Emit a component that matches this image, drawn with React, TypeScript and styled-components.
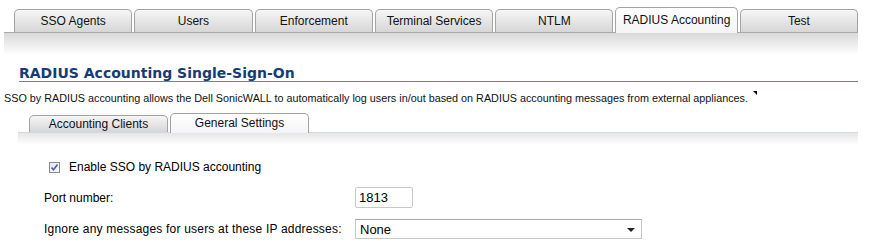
import React from 'react';
import styled, { createGlobalStyle } from 'styled-components';

const GlobalStyle = createGlobalStyle`
  body {
    margin:0;
    background:#fff;
    font-family:"Liberation Sans", Arial, sans-serif;
    color:#000;
  }
`

const Page = styled.div`
  width:870px;
  height:247px;
  overflow:hidden;
  padding-top:7px;
  box-sizing:border-box;
`

const TabBar = styled.div<{ $left: number; $width: number; $pad: number; $line: string }>`
  display:flex;
  align-items:flex-end;
  gap:2px;
  margin-left:${({ $left }) => $left}px;
  width:${({ $width }) => $width}px;
  padding-left:${({ $pad }) => $pad}px;
  box-sizing:border-box;
  border-bottom:1px solid ${({ $line }) => $line};
`

const Tab = styled.div<{ $active?: boolean; $w: number; $h: number }>`
  width:${({ $w }) => $w}px;
  height:${({ $h, $active }) => ($active ? $h + 3 : $h)}px;
  box-sizing:border-box;
  border:1px solid #a3a3a3;
  border-bottom:none;
  border-radius:5px 5px 0 0;
  background:${({ $active }) =>
    $active ? 'linear-gradient(#ffffff, #f4f4f6)' : 'linear-gradient(#f6f6f6, #d6d6d6)'};
  display:flex;
  align-items:center;
  justify-content:center;
  font-size:12px;
  color:#111;
  margin-bottom:${({ $active }) => ($active ? '-1px' : '0')};
  padding-bottom:${({ $active }) => ($active ? '1px' : '0')};
`

const Fade = styled.div<{ $left: number; $width: number; $h: number; $from: string }>`
  margin-left:${({ $left }) => $left}px;
  width:${({ $width }) => $width}px;
  height:${({ $h }) => $h}px;
  background:linear-gradient(${({ $from }) => $from}, #ffffff);
`

const Title = styled.h2`
  margin:11px 0 0 19px;
  width:839px;
  font-family:"DejaVu Sans", Verdana, sans-serif;
  font-size:14px;
  font-weight:bold;
  color:#173b76;
  line-height:15px;
  border-bottom:1px solid #5a8aa8;
`

const Desc = styled.p`
  margin:10px 0 0 4px;
  font-size:10.8px;
  line-height:13px;
  color:#111;
  display:flex;
  align-items:flex-start;
  gap:5px;
`

const Mark = styled.span`
  display:inline-block;
  width:0;
  height:0;
  border-top:4px solid #000;
  border-left:4px solid transparent;
  margin-top:-1px;
`

const SubTabs = styled.div`
  margin-top:8px;
`

const Form = styled.div`
  padding:15px 0 0 44px;
  display:flex;
  flex-direction:column;
  font-size:12px;
`

const CheckRow = styled.label`
  display:flex;
  align-items:center;
  gap:9px;
  margin-left:5px;
  height:14px;
`

const Check = styled.span`
  width:11px;
  height:11px;
  box-sizing:border-box;
  border:1px solid #8c8c8c;
  background:linear-gradient(135deg, #e8e8e8, #f8f8f8);
  display:flex;
  align-items:center;
  justify-content:center;
`

const Row = styled.div<{ $top: number }>`
  display:flex;
  align-items:center;
  margin-top:${({ $top }) => $top}px;
`

const Label = styled.span<{ $spacing?: number }>`
  width:311px;
  letter-spacing:${({ $spacing }) => $spacing ?? 0}px;
`

const Input = styled.div`
  width:58px;
  height:21px;
  box-sizing:border-box;
  border:1px solid #c8c8c8;
  border-radius:2px;
  padding:2px 0 0 3px;
  font-size:13px;
`

const Select = styled.div`
  width:287px;
  height:20px;
  box-sizing:border-box;
  border:1px solid #c8c8c8;
  border-top-color:#a8a8a8;
  display:flex;
  align-items:center;
  justify-content:space-between;
  padding:0 6px 0 4px;
  font-size:13px;
`

const Caret = styled.span`
  width:0;
  height:0;
  border-left:4px solid transparent;
  border-right:4px solid transparent;
  border-top:4px solid #222;
  margin-top:2px;
`

const mainTabs = ['SSO Agents', 'Users', 'Enforcement', 'Terminal Services', 'NTLM', 'RADIUS Accounting', 'Test'];
const subTabs = ['Accounting Clients', 'General Settings'];

const App = () => {
  return (
    <Page>
      <GlobalStyle />
      <TabBar $left={4} $width={854} $pad={10} $line="#a9a9a9">
        {mainTabs.map((t) => (
          <Tab key={t} $w={t === 'RADIUS Accounting' ? 123 : 119} $h={23} $active={t === 'RADIUS Accounting'}>
            {t}
          </Tab>
        ))}
      </TabBar>
      <Fade $left={4} $width={854} $h={22} $from="#d9d9d9" />
      <Title>RADIUS Accounting Single-Sign-On</Title>
      <Desc>
        SSO by RADIUS accounting allows the Dell SonicWALL to automatically log users in/out based on RADIUS accounting messages from external appliances.
        <Mark />
      </Desc>
      <SubTabs>
        <TabBar $left={18} $width={840} $pad={11} $line="#d3d6e6">
          {subTabs.map((t) => (
            <Tab key={t} $w={139} $h={17} $active={t === 'General Settings'}>
              {t}
            </Tab>
          ))}
        </TabBar>
        <Fade $left={18} $width={840} $h={12} $from="#e6e6e6" />
      </SubTabs>
      <Form>
        <CheckRow>
          <Check>
            <svg width="9" height="9" viewBox="0 0 9 9">
              <path d="M1.5 4.5 L3.5 6.8 L7.5 1.5" stroke="#4a5ea8" strokeWidth="1.6" fill="none" />
            </svg>
          </Check>
          Enable SSO by RADIUS accounting
        </CheckRow>
        <Row $top={13}>
          <Label>Port number:</Label>
          <Input>1813</Input>
        </Row>
        <Row $top={11}>
          <Label $spacing={0.2}>Ignore any messages for users at these IP addresses:</Label>
          <Select>
            None
            <Caret />
          </Select>
        </Row>
      </Form>
    </Page>
  );
};

export default App;
